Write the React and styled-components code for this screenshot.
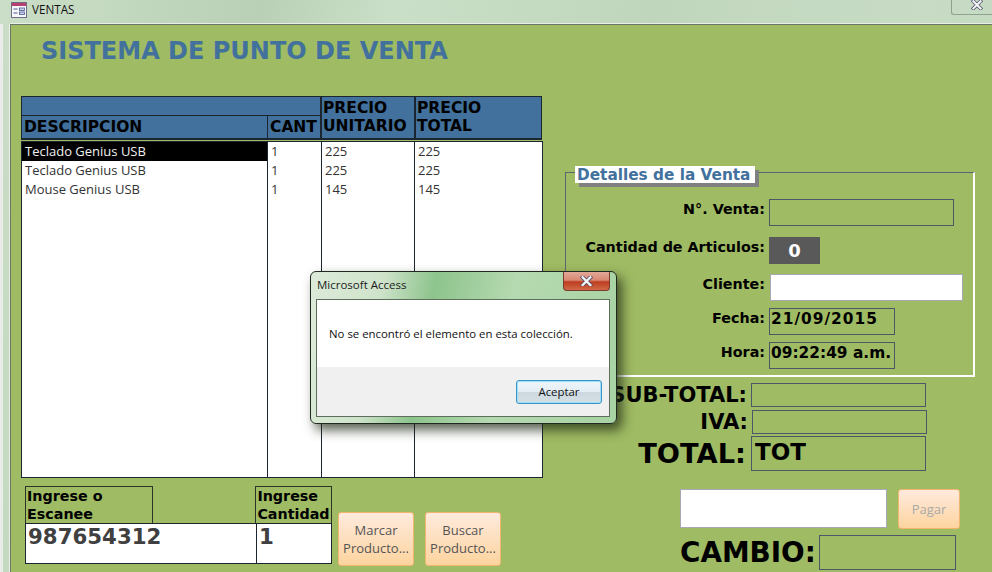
import React from 'react'
import styled, { createGlobalStyle } from 'styled-components'

const rows = [
  { name: 'Teclado Genius USB', qty: '1', price: '225', total: '225' },
  { name: 'Teclado Genius USB', qty: '1', price: '225', total: '225' },
  { name: 'Mouse Genius USB', qty: '1', price: '145', total: '145' },
]

function App() {
  return (
    <Window>
      <GlobalStyle />
      <TitleBar>
        <FormIcon />
        <TitleText>VENTAS</TitleText>
        <CloseTab>
          <CloseGlyph size={12} />
        </CloseTab>
      </TitleBar>
      <Chrome>
        <Form>
          <Heading>SISTEMA DE PUNTO DE VENTA</Heading>
          <Columns>
            <LeftColumn>
              <HeaderGrid>
                <HeadBlank />
                <HeadPrice $col={3}>PRECIO<br />UNITARIO</HeadPrice>
                <HeadPrice $col={4}>PRECIO<br />TOTAL</HeadPrice>
                <HeadCell $col={1}>DESCRIPCION</HeadCell>
                <HeadCell $col={2}>CANT</HeadCell>
              </HeaderGrid>
              <ListBox>
                <ListColumn $w={246}>
                  {rows.map((r, i) => (
                    <ListRow key={i} $selected={i === 0}>{r.name}</ListRow>
                  ))}
                </ListColumn>
                <ListColumn $w={54}>
                  {rows.map((r, i) => <ListRow key={i}>{r.qty}</ListRow>)}
                </ListColumn>
                <ListColumn $w={93}>
                  {rows.map((r, i) => <ListRow key={i}>{r.price}</ListRow>)}
                </ListColumn>
                <ListColumn $w={126} $last>
                  {rows.map((r, i) => <ListRow key={i}>{r.total}</ListRow>)}
                </ListColumn>
              </ListBox>
              <EntryRow>
                <ScanBlock>
                  <ScanLabels>
                    <ScanLabel $w={129}>Ingrese o Escanee</ScanLabel>
                    <ScanLabel $w={77} $push={102}>Ingrese Cantidad</ScanLabel>
                  </ScanLabels>
                  <ScanInputs>
                    <ScanInput $w={232}>987654312</ScanInput>
                    <ScanInput $w={76} $joined>1</ScanInput>
                  </ScanInputs>
                </ScanBlock>
                <PeachButton $w={76} $gap={6}>Marcar Producto...</PeachButton>
                <PeachButton $w={76} $gap={11}>Buscar Producto...</PeachButton>
              </EntryRow>
            </LeftColumn>

            <RightColumn>
              <GroupBox>
                <Legend>Detalles de la Venta</Legend>
                <DetailRow $top={26}>
                  <DetailLabel>N°. Venta:</DetailLabel>
                  <ValueBox $w={185} />
                </DetailRow>
                <DetailRow $top={11}>
                  <DetailLabel>Cantidad de Articulos:</DetailLabel>
                  <CountBox>0</CountBox>
                </DetailRow>
                <DetailRow $top={10}>
                  <DetailLabel>Cliente:</DetailLabel>
                  <WhiteBox />
                </DetailRow>
                <DetailRow $top={7}>
                  <DetailLabel>Fecha:</DetailLabel>
                  <ValueBox $w={126} $tracking={1}>21/09/2015</ValueBox>
                </DetailRow>
                <DetailRow $top={7}>
                  <DetailLabel>Hora:</DetailLabel>
                  <ValueBox $w={126}>09:22:49 a.m.</ValueBox>
                </DetailRow>
              </GroupBox>
              <TotalRow $top={6}>
                <TotalLabel>SUB-TOTAL:</TotalLabel>
                <TotalBox $h={24} />
              </TotalRow>
              <TotalRow $top={3} $nudge={1}>
                <TotalLabel>IVA:</TotalLabel>
                <TotalBox $h={24} />
              </TotalRow>
              <TotalRow $top={2}>
                <GrandLabel>TOTAL:</GrandLabel>
                <TotalBox $h={35}>TOT</TotalBox>
              </TotalRow>
              <PayRow>
                <PayInput />
                <PeachButton $w={62} $h={40} $muted>Pagar</PeachButton>
              </PayRow>
              <ChangeRow>
                <ChangeLabel>CAMBIO:</ChangeLabel>
                <ChangeBox />
              </ChangeRow>
            </RightColumn>
          </Columns>
        </Form>
      </Chrome>

      <Dialog>
        <DialogTitle>
          <span>Microsoft Access</span>
          <DialogClose>
            <CloseGlyph size={13} />
          </DialogClose>
        </DialogTitle>
        <DialogBody>
          <DialogMessage>No se encontró el elemento en esta colección.</DialogMessage>
          <DialogFooter>
            <AcceptButton>Aceptar</AcceptButton>
          </DialogFooter>
        </DialogBody>
      </Dialog>
    </Window>
  )
}

export default App

function FormIcon() {
  return (
    <svg width="16" height="16" viewBox="0 0 16 16" style={{ flexShrink: 0 }}>
      <rect x="0.5" y="0.5" width="15" height="15" fill="#f7f7fb" stroke="#6e6e86" />
      <rect x="1" y="1" width="14" height="3" fill="#b8406e" />
      <path d="M2.5 7h4M2.5 11h4" stroke="#4a5a90" strokeWidth="1.2" />
      <rect x="8.5" y="6" width="5" height="2.5" fill="#c8d2ea" stroke="#4a5a90" strokeWidth="0.8" />
      <rect x="8.5" y="10" width="5" height="2.5" fill="#c8d2ea" stroke="#4a5a90" strokeWidth="0.8" />
    </svg>
  )
}

function CloseGlyph({ size }) {
  return (
    <svg width={size} height={size * 0.8} viewBox="0 0 15 12">
      <path d="M3 1.5l9 9M12 1.5l-9 9" stroke="#50506a" strokeWidth="4.4" strokeLinecap="square" />
      <path d="M3 1.5l9 9M12 1.5l-9 9" stroke="#f4f4f8" strokeWidth="2.6" strokeLinecap="square" />
    </svg>
  )
}

const GlobalStyle = createGlobalStyle`
  html, body {
    margin: 0;
    padding: 0;
    background: #c6dbc2;
    overflow: hidden;
  }
  * {
    box-sizing: border-box;
  }
`

const Window = styled.div`
  position: relative;
  width: 992px;
  height: 572px;
  overflow: hidden;
  font-family: "DejaVu Sans", sans-serif;
  background: linear-gradient(100deg, #cbdec8 0%, #c2d8be 12%, #b9d0b6 24%, #cadfc7 36%, #c0d6bc 60%, #c8dcc5 85%, #c2d7be 100%);
`

const TitleBar = styled.div`
  height: 24px;
  display: flex;
  align-items: flex-start;
  padding: 2px 0 0 11px;
  gap: 5px;
`

const TitleText = styled.span`
  font-family: "Open Sans", sans-serif;
  font-size: 11.7px;
  line-height: 14px;
  color: #111;
`

const CloseTab = styled.div`
  margin-left: auto;
  margin-top: -2px;
  width: 41px;
  height: 15px;
  border: 1px solid #8ea38c;
  border-width: 0 0 1px 1px;
  border-bottom-left-radius: 3px;
  display: flex;
  justify-content: flex-end;
  align-items: flex-start;
  padding-right: 9px;
`

const Chrome = styled.div`
  height: 548px;
  border-left: 3px solid #e9ece8;
  padding-left: 7px;
`

const Form = styled.div`
  height: 100%;
  background: #9fbb63;
  border-top: 1px solid #6b7568;
  border-left: 1px solid #6b7568;
  box-shadow: 0 -1px 0 #e8efe4, -1px 0 0 #e8efe4;
  padding: 13px 0 0 10px;
`

const Heading = styled.h1`
  margin: 0 0 0 20px;
  font-size: 24px;
  line-height: 27px;
  font-weight: 700;
  color: #41719c;
  white-space: nowrap;
`

const Columns = styled.div`
  display: flex;
  margin-top: 31px;
`

const LeftColumn = styled.div`
  width: 522px;
  flex-shrink: 0;
`

const HeaderGrid = styled.div`
  display: grid;
  grid-template-columns: 245px 53px 94px 127px;
  grid-template-rows: 19px 23px;
  height: 44px;
  width: 521px;
  background: #41719c;
  border: 1px solid #1c2630;
  border-bottom-width: 2px;
`

const HeadBlank = styled.div`
  grid-column: 1 / 3;
  grid-row: 1;
  border-bottom: 1px solid #1c2630;
`

const HeadPrice = styled.div`
  grid-column: ${(p) => p.$col};
  grid-row: 1 / 3;
  border-left: 2px solid #1c2630;
  padding: 2px 0 0 1px;
  font-size: 15.5px;
  line-height: 18px;
  font-weight: 700;
  color: #000;
  white-space: nowrap;
`

const HeadCell = styled.div`
  grid-column: ${(p) => p.$col};
  grid-row: 2;
  font-size: 15.5px;
  line-height: 23px;
  font-weight: 700;
  color: #000;
  padding-left: 2px;
  white-space: nowrap;
  & + & {
    border-left: 1px solid #1c2630;
  }
`

const ListBox = styled.div`
  display: flex;
  width: 522px;
  height: 337px;
  margin-top: 1px;
  background: #fff;
  border: 1px solid #1c2630;
`

const ListColumn = styled.div`
  width: ${(p) => p.$w}px;
  border-right: ${(p) => (p.$last ? 'none' : '1px solid #1c2630')};
`

const ListRow = styled.div`
  height: 19px;
  padding-left: 3px;
  font-family: "Open Sans", sans-serif;
  font-size: 13px;
  line-height: 19px;
  white-space: nowrap;
  color: ${(p) => (p.$selected ? '#f0f0f0' : '#333')};
  background: ${(p) => (p.$selected ? '#000' : 'transparent')};
`

const EntryRow = styled.div`
  display: flex;
  align-items: flex-end;
  margin-top: 8px;
  padding-left: 4px;
`

const ScanBlock = styled.div`
  width: 307px;
`

const ScanLabels = styled.div`
  display: flex;
`

const ScanLabel = styled.div`
  width: ${(p) => p.$w}px;
  height: 38px;
  margin-left: ${(p) => p.$push || 0}px;
  border: 1px solid #2c3328;
  padding: 1px 0 0 1px;
  font-size: 14.3px;
  line-height: 17.5px;
  font-weight: 700;
  color: #000;
`

const ScanInputs = styled.div`
  display: flex;
  margin-top: -1px;
`

const ScanInput = styled.div`
  width: ${(p) => p.$w}px;
  height: 41px;
  margin-left: ${(p) => (p.$joined ? '-1px' : '0')};
  background: #fff;
  border: 1px solid #1c2630;
  padding: 0 2px;
  font-size: 21.3px;
  line-height: 26px;
  font-weight: 700;
  color: #404040;
`

const PeachButton = styled.div`
  width: ${(p) => p.$w}px;
  height: ${(p) => p.$h || 54}px;
  margin-left: ${(p) => p.$gap ?? 0}px;
  margin-bottom: ${(p) => (p.$muted ? 0 : '-2px')};
  flex-shrink: 0;
  display: flex;
  align-items: center;
  justify-content: center;
  text-align: center;
  font-family: "Open Sans", sans-serif;
  font-size: 13px;
  line-height: 18px;
  color: ${(p) => (p.$muted ? '#a9a9a9' : '#555')};
  background: linear-gradient(#ffeadd, #fdd49f);
  border: 1px solid #f2b56f;
  border-radius: 3px;
`

const RightColumn = styled.div`
  margin-left: 22px;
  margin-top: 76px;
  width: 410px;
  flex-shrink: 0;
`

const GroupBox = styled.div`
  position: relative;
  width: 410px;
  height: 205px;
  border: 1px solid #5e6472;
  border-right: 2px solid #fff;
  border-bottom: 2px solid #fff;
`

const Legend = styled.div`
  position: absolute;
  left: 9px;
  top: -7px;
  height: 17px;
  padding: 0 5px 0 2px;
  background: #fff;
  box-shadow: 4px 4px 0 #808080;
  font-size: 15.3px;
  line-height: 19px;
  font-weight: 700;
  color: #41719c;
  white-space: nowrap;
`

const DetailRow = styled.div`
  display: flex;
  margin-top: ${(p) => p.$top}px;
  padding-left: 2px;
`

const DetailLabel = styled.div`
  width: 197px;
  padding-top: 1px;
  margin-right: 4px;
  text-align: right;
  font-size: 14.3px;
  line-height: 18px;
  font-weight: 700;
  color: #000;
  white-space: nowrap;
`

const ValueBox = styled.div`
  width: ${(p) => p.$w}px;
  height: 27px;
  border: 1px solid #4e5768;
  padding: 1px 0 0 1px;
  font-size: 15.4px;
  line-height: 19px;
  letter-spacing: ${(p) => p.$tracking || 0}px;
  font-weight: 700;
  color: #000;
  white-space: nowrap;
`

const CountBox = styled.div`
  width: 51px;
  height: 27px;
  background: #595959;
  color: #fff;
  text-align: center;
  font-size: 18px;
  line-height: 27px;
  font-weight: 700;
`

const WhiteBox = styled.div`
  width: 193px;
  height: 27px;
  margin-left: 1px;
  background: #fff;
  border: 1px solid #a9a9b5;
`

const TotalRow = styled.div`
  display: flex;
  align-items: center;
  margin-top: ${(p) => p.$top}px;
  padding-left: ${(p) => p.$nudge || 0}px;
`

const TotalLabel = styled.div`
  width: 182px;
  margin-right: 4px;
  text-align: right;
  font-size: 21px;
  line-height: 24px;
  font-weight: 700;
  color: #000;
  white-space: nowrap;
`

const GrandLabel = styled.div`
  width: 181px;
  margin-right: 5px;
  text-align: right;
  font-size: 27.3px;
  line-height: 30px;
  font-weight: 700;
  color: #000;
  white-space: nowrap;
`

const TotalBox = styled.div`
  width: 175px;
  height: ${(p) => p.$h}px;
  border: 1px solid #4e5768;
  padding-left: 3px;
  font-size: 23px;
  line-height: 30px;
  font-weight: 700;
  color: #000;
`

const PayRow = styled.div`
  display: flex;
  gap: 11px;
  margin-top: 18px;
  padding-left: 115px;
`

const PayInput = styled.div`
  width: 207px;
  height: 39px;
  background: #fff;
  border: 1px solid #a9a9b5;
`

const ChangeRow = styled.div`
  display: flex;
  align-items: center;
  gap: 3px;
  margin-top: 6px;
  padding-left: 115px;
`

const ChangeLabel = styled.div`
  font-size: 27.8px;
  line-height: 30px;
  font-weight: 700;
  color: #000;
  white-space: nowrap;
`

const ChangeBox = styled.div`
  width: 137px;
  height: 35px;
  border: 1px solid #4e5768;
`

const Dialog = styled.div`
  position: absolute;
  left: 310px;
  top: 271px;
  width: 307px;
  height: 153px;
  border: 1px solid #20291f;
  border-radius: 6px;
  padding: 0 6px 6px 5px;
  background: linear-gradient(100deg, #dcebd9 0%, #cfe3cb 22%, #8dc48c 38%, #b5d9b0 62%, #a8d3a3 100%);
  box-shadow: 5px 6px 12px rgba(30, 40, 20, 0.75);
  display: flex;
  flex-direction: column;
`

const DialogTitle = styled.div`
  position: relative;
  height: 27px;
  padding: 5px 0 0 1px;
  font-family: "Open Sans", sans-serif;
  font-size: 11.5px;
  line-height: 15px;
  color: #1c1c1c;
`

const DialogClose = styled.div`
  position: absolute;
  right: 0;
  top: 0;
  width: 47px;
  height: 19px;
  border: 1px solid #7a3a2c;
  border-top: none;
  border-radius: 0 0 4px 4px;
  background: linear-gradient(#e2a898 0%, #d88873 45%, #be3d1f 55%, #cf6a48 100%);
  display: flex;
  align-items: center;
  justify-content: center;
`

const DialogBody = styled.div`
  flex: 1;
  background: #fff;
  border: 1px solid #5e6e5c;
  display: flex;
  flex-direction: column;
`

const DialogMessage = styled.div`
  height: 67px;
  padding: 26px 0 0 12px;
  font-family: "Open Sans", sans-serif;
  font-size: 11.4px;
  line-height: 16px;
  color: #111;
  white-space: nowrap;
`

const DialogFooter = styled.div`
  flex: 1;
  background: #f0f0f0;
  display: flex;
  justify-content: flex-end;
  align-items: flex-start;
  padding: 13px 7px 0 0;
`

const AcceptButton = styled.div`
  width: 86px;
  height: 24px;
  border: 1px solid #3c94c4;
  border-radius: 3px;
  background: linear-gradient(#edf6fb 0%, #e3edf3 48%, #ccd8df 52%, #d6e0e6 100%);
  box-shadow: inset 0 0 0 1px #9fe0f8;
  text-align: center;
  font-family: "Open Sans", sans-serif;
  font-size: 11.4px;
  line-height: 22px;
  color: #111;
`
